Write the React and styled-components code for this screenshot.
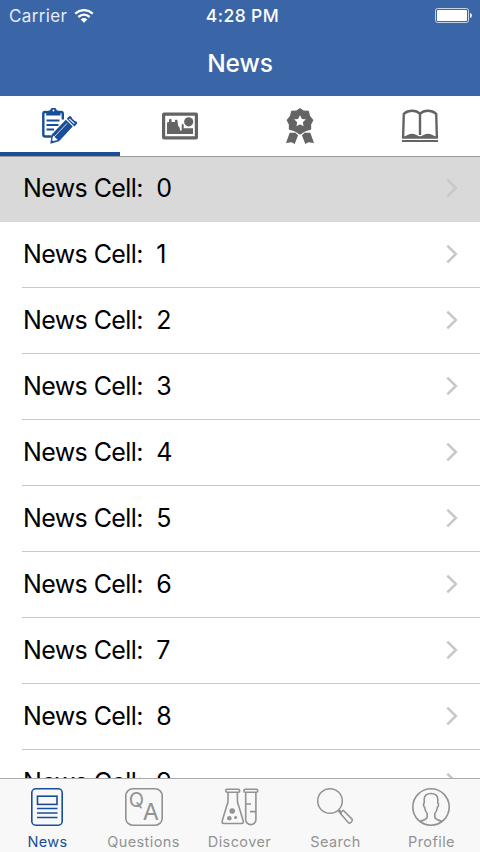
import React from "react";
import styled, { createGlobalStyle } from "styled-components";

const BLUE = "#184d9a";
const GREY = "#646464";
const MUTED = "#929292";

const GlobalStyle = createGlobalStyle`
  * { box-sizing: border-box; }
  body { margin: 0; overflow: hidden; }
`;

const Screen = styled.div`
  display: flex;
  flex-direction: column;
  width: 480px;
  height: 852px;
  overflow: hidden;
  background: #fff;
  font-family: Inter, "Liberation Sans", sans-serif;
`;

const Header = styled.header`
  flex: none;
  height: 96px;
  color: #fff;
  background: #3a66a8;
`;

const StatusBar = styled.div`
  display: grid;
  grid-template-columns: 1fr auto 1fr;
  align-items: center;
  height: 30px;
  padding: 1px 8px 0 9px;
`;

const Carrier = styled.div`
  display: flex;
  align-items: center;
  gap: 7px;
  font-size: 17px;
  letter-spacing: 0.35px;
  color: #e6edf6;
`;

const Clock = styled.div`
  padding-left: 4px;
  font-size: 17.5px;
  font-weight: 500;
  letter-spacing: 0.4px;
`;

const Battery = styled.svg`
  justify-self: end;
`;

const Title = styled.h1`
  margin: 0;
  height: 66px;
  line-height: 67px;
  text-align: center;
  font-size: 24.5px;
  font-weight: 550;
  letter-spacing: -0.1px;
`;

const Tabs = styled.nav`
  display: grid;
  grid-template-columns: repeat(4, 1fr);
  flex: none;
  height: 61px;
  border-bottom: 1px solid #999;
`;

const Tab = styled.button`
  display: flex;
  align-items: center;
  justify-content: center;
  height: 60px;
  padding: 4px 0 0;
  border: 0;
  border-bottom: 4px solid ${(p) => (p.$active ? BLUE : "transparent")};
  background: none;
  color: ${(p) => (p.$active ? BLUE : GREY)};
`;

const List = styled.ul`
  flex: 1;
  min-height: 0;
  margin: 0;
  padding: 0;
  overflow: hidden;
  list-style: none;
`;

const Row = styled.li`
  height: ${(p) => (p.$selected ? 65 : 66)}px;
  padding-left: 22px;
  background: ${(p) => (p.$selected ? "#d9d9d9" : "transparent")};
`;

const RowBody = styled.div`
  display: flex;
  align-items: center;
  justify-content: space-between;
  height: 100%;
  padding: 0 22px 2px 1px;
  border-bottom: 1px solid ${(p) => (p.$selected ? "transparent" : "#c8c7cc")};
`;

const RowLabel = styled.span`
  display: flex;
  gap: 13.5px;
  font-size: 25px;
  line-height: 30px;
  letter-spacing: -0.6px;
  color: #000;
`;

const TabBar = styled.nav`
  display: grid;
  grid-template-columns: repeat(5, 96px);
  flex: none;
  height: 74px;
  margin: 0;
  border-top: 1px solid #aaa;
  background: #f8f8f8;
`;

const BarItem = styled.button`
  display: flex;
  flex-direction: column;
  align-items: center;
  padding: 8px 1px 0 0;
  border: 0;
  background: none;
  color: ${(p) => (p.$active ? BLUE : MUTED)};
  font-family: inherit;
`;

const BarLabel = styled.span`
  margin-top: 6px;
  font-size: 14.5px;
  line-height: 18px;
  letter-spacing: 0.4px;
`;

const Glyph = styled.text`
  font-family: Inter, sans-serif;
  fill: currentColor;
`;

const WifiIcon = () => (
  <svg width="20" height="14" viewBox="0 0 20 14" fill="none" stroke="#fff" strokeWidth="2.3">
    <path d="M1.2 4.7Q10-2.4 18.8 4.7M4.3 8Q10 3.3 15.7 8" />
    <path d="M10 13.7 6.7 10.4Q10 7.8 13.3 10.4Z" fill="#fff" stroke="none" />
  </svg>
);

const BatteryIcon = () => (
  <Battery width="37" height="15" viewBox="0 0 37 15">
    <rect x=".5" y=".5" width="33" height="14" rx="2" fill="none" stroke="#c7d5e9" />
    <rect x="2" y="2" width="30" height="11" rx=".7" fill="#fff" />
    <path d="M35 5q2 .3 2 2.5T35 10z" fill="#e6edf7" />
  </Battery>
);

const ClipboardIcon = () => (
  <svg width="36" height="36" viewBox="42 108 36 36" fill="none" stroke="currentColor">
    <path d="M46 112h-1q-1.700 0-1.700 2V134.500q0 2 2 2h5.500M60 112h1q1.800 0 1.800 2v4.500" strokeWidth="2.400" strokeLinecap="round" />
    <path d="M46.200 115.500V111.300l4-1a3.300 3.300 0 0 1 6.500 0l3.800 1v4.200z" fill="currentColor" stroke="none" />
    <circle cx="53.500" cy="110.600" r="1" fill="#fff" stroke="none" />
    <path d="M46.500 120.500h13M46.500 125h12M46.500 129.500h7.500" strokeWidth="2.100" />
    <path d="m50.300 143.800 1.500-9.300L65.800 119.800l7 6.700-13.800 14.800z" fill="currentColor" stroke="none" />
    <path d="m54.200 136.800 12.800-13.400" stroke="#fff" strokeWidth=".8" />
    <path d="m52 140.500 1.200-5 4.600 4.400-4.200 1.100z" fill="#fff" stroke="none" />
    <path d="m66.800 118.700 2.100-2.300q1-1 2 0l5.900 5.500q1 1 0 2l-2.500 2.600z" fill="currentColor" stroke="none" />
    <path d="m69.200 118.800 5.200 4.800M71.900 117.600l3.800 3.600" stroke="#fff" strokeWidth="1.100" />
  </svg>
);

const PictureIcon = () => (
  <svg width="36" height="28" viewBox="162 112 36 28" fill="currentColor">
    <path fillRule="evenodd" d="M164 112.500h32q2 0 2 2v23q0 2-2 2h-32q-2 0-2-2v-23q0-2 2-2zm1.200 3.200v20.600h29.600v-20.600z" />
    <path d="M167 134v-11.500l2-.5v-2.500l1.500-.8 1 .8v2.500h3.500v-2l1.300-.4 1.200 1 .5 5 1.500 2 .7 3 1.500-.2V124.800l1-1 1 1v3.500h9.300v5.700z" />
    <circle cx="188.700" cy="121.800" r="4.600" />
  </svg>
);

const AwardIcon = () => (
  <svg width="28" height="36" viewBox="286 108 28 36" fill="currentColor">
    <path fillRule="evenodd" stroke="currentColor" strokeWidth="1.200" strokeLinejoin="round" d="m300 108.800 3.600 2.400 4.800.2 1 4.800 3.300 4-2.200 4.300.1 4.600-5 1.500-5.600 3.400-5.600-3.400-5-1.500.1-4.600-2.200-4.300 3.300-4 1-4.800 4.800-.2zm0 5-2.200 4.500-4.900.7 3.600 3.500-.9 4.900 4.400-2.300 4.400 2.300-.9-4.900 3.600-3.500-4.900-.7z" />
    <path d="M289.700 132.800q4 .2 5.300-.2l3.100 2.700-3.400 8.700-3.200-1.800-5.500.8zM310.300 132.800q-4 .2-5.300-.2l-3.100 2.700 3.400 8.700 3.200-1.800 5.500.8z" />
  </svg>
);

const BookIcon = () => (
  <svg width="36" height="34" viewBox="402 109 36 34" fill="none" stroke="currentColor" strokeWidth="2.200">
    <path d="M420 113.800q-3-3-7.800-3t-8.400 3l-.7 23.700h33.800l-.7-23.700q-3.600-3-8.400-3t-7.800 3zM420 113v22" strokeWidth="2.400" />
    <path d="M404 137.500q8-7.500 16 0 8-7.500 16 0z" fill="currentColor" stroke="none" />
    <path d="M402 141h36" />
  </svg>
);

const ChevronIcon = () => (
  <svg width="12" height="20" viewBox="0 0 12 20" fill="none" stroke="#c7c7cc" strokeWidth="2.500">
    <path d="m1.300 1.700 8.600 8.300-8.600 8.300" />
  </svg>
);

const NewsIcon = () => (
  <svg width="33" height="40" viewBox="31 787 33 40" fill="none" stroke="currentColor" strokeWidth="1.600">
    <rect x="31.800" y="788.800" width="30.400" height="36.400" rx="4" />
    <rect x="37.500" y="796.200" width="19.500" height="8.200" />
    <path d="M37 808.500h20.500M37 813h20.500M37 817.500h20.500" strokeWidth="1.400" />
  </svg>
);

const QuestionsIcon = () => (
  <svg width="39" height="40" viewBox="124 787 39 40">
    <rect x="125.800" y="788.800" width="36.400" height="36.400" rx="7" fill="none" stroke="currentColor" strokeWidth="1.600" />
    <Glyph x="128.800" y="807.300" fontSize="20">Q</Glyph>
    <Glyph x="142.800" y="819.700" fontSize="23.500">A</Glyph>
  </svg>
);

const DiscoverIcon = () => (
  <svg width="39" height="40" viewBox="220 787 39 40" fill="none" stroke="currentColor" strokeWidth="1.600">
    <rect x="225.700" y="789.300" width="14" height="3" rx="1.500" />
    <path d="M228 792.500v8q0 3-1.500 6l-4.200 14q-1 3 1.800 3h17.200q2.800 0 1.800-3l-4.200-14q-1.500-3-1.500-6v-8" />
    <rect x="243.800" y="789.300" width="14" height="3" rx="1.500" />
    <path d="M245.700 792.500v27a5.100 5.100 0 0 0 10.200 0v-27M245.700 804h5.300M250 811.600h5.900" />
    <g fill="currentColor" stroke="none">
      <circle cx="232.200" cy="811" r="2.800" />
      <circle cx="229.300" cy="818.300" r="2.300" />
      <circle cx="235.600" cy="817.500" r="1.500" />
    </g>
  </svg>
);

const SearchIcon = () => (
  <svg width="39" height="40" viewBox="316 787 39 40" fill="none" stroke="currentColor" strokeWidth="1.500">
    <circle cx="330" cy="801" r="12.300" />
    <path d="m338.700 810 2.500 2.600" strokeWidth="2.200" />
    <path d="m340.200 813.200 3-3 8.600 8.700q1.300 1.300 0 2.600l-1 1q-1.300 1.300-2.600 0zM338.200 810.600l3.500 3.500" strokeLinejoin="round" />
  </svg>
);

const ProfileIcon = () => (
  <svg width="39" height="40" viewBox="412 787 39 40" fill="none" stroke="currentColor" strokeWidth="1.600">
    <circle cx="431" cy="807" r="18.200" />
    <path d="M420 821.500c4-2 7-1.500 7.200-4.500v-3.500c-2-2-2.300-4-2.500-6-1.500-1-1.500-4-.5-4.500v-4q.4-5.500 6.800-5.500t6.800 5.500v4c1 .5 1 3.500-.5 4.500-.2 2-.5 4-2.500 6v3.500c.2 3 3.200 2.500 7.200 4.500" />
  </svg>
);

const sections = [ClipboardIcon, PictureIcon, AwardIcon, BookIcon];
const destinations = [
  ["News", NewsIcon],
  ["Questions", QuestionsIcon],
  ["Discover", DiscoverIcon],
  ["Search", SearchIcon],
  ["Profile", ProfileIcon],
];

export default function App() {
  return (
    <Screen>
      <GlobalStyle />
      <Header>
        <StatusBar>
          <Carrier>Carrier <WifiIcon /></Carrier>
          <Clock>4:28 PM</Clock>
          <BatteryIcon />
        </StatusBar>
        <Title>News</Title>
      </Header>
      <Tabs>
        {sections.map((Icon, i) => (
          <Tab key={i} $active={i === 0}><Icon /></Tab>
        ))}
      </Tabs>
      <List>
        {Array.from({ length: 10 }, (_, i) => (
          <Row key={i} $selected={i === 0}>
            <RowBody $selected={i === 0}>
              <RowLabel><span>News Cell:</span><span>{i}</span></RowLabel>
              <ChevronIcon />
            </RowBody>
          </Row>
        ))}
      </List>
      <TabBar>
        {destinations.map(([label, Icon], i) => (
          <BarItem key={label} $active={i === 0}>
            <Icon />
            <BarLabel>{label}</BarLabel>
          </BarItem>
        ))}
      </TabBar>
    </Screen>
  );
}
